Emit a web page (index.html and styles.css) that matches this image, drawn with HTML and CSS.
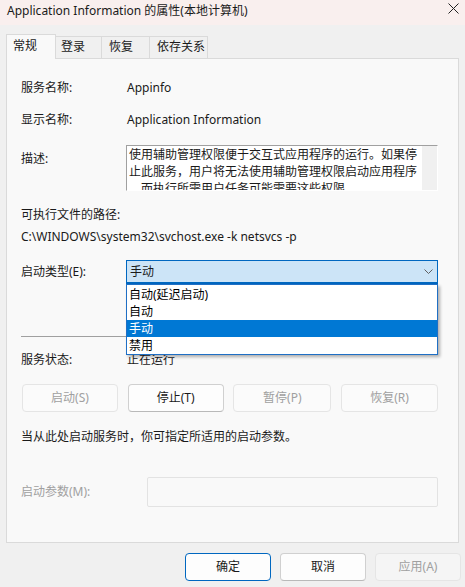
FILE: index.html
```html
<!DOCTYPE html>
<html lang="zh-CN">
<head>
<meta charset="utf-8">
<title>Application Information 的属性(本地计算机)</title>
<link rel="stylesheet" href="styles.css">
</head>
<body>
<div class="window">
  <div class="titlebar">
    <span class="title">Application Information 的属性(本地计算机)</span>
    <svg class="close" width="11" height="11" viewBox="0 0 11 11"><path d="M0.5 0.5 L10.5 10.5 M10.5 0.5 L0.5 10.5" stroke="#222" stroke-width="1" fill="none"/></svg>
  </div>
  <div class="client">
    <div class="tabs">
      <div class="tab tab-general active">常规</div>
      <div class="tab tab-logon">登录</div>
      <div class="tab tab-recovery">恢复</div>
      <div class="tab tab-deps">依存关系</div>
    </div>
    <div class="panel">
      <div class="row">
        <span class="label">服务名称:</span>
        <span class="value">Appinfo</span>
      </div>
      <div class="row row-display">
        <span class="label">显示名称:</span>
        <span class="value">Application Information</span>
      </div>
      <div class="row row-desc">
        <span class="label label-desc">描述:</span>
        <div class="descbox">
          <div class="desctext">使用辅助管理权限便于交互式应用程序的运行。如果停<br>止此服务，用户将无法使用辅助管理权限启动应用程序<br>，而执行所需用户任务可能需要这些权限。</div>
          <div class="scrolltrack"></div>
        </div>
      </div>
      <div class="exe-label">可执行文件的路径:</div>
      <div class="exe-path">C:\WINDOWS\system32\svchost.exe -k netsvcs -p</div>
      <div class="row row-type">
        <span class="label">启动类型(E):</span>
        <div class="select">
          <span>手动</span>
          <svg width="9" height="5" viewBox="0 0 9 5"><path d="M0.5 0.5 L4.5 4.5 L8.5 0.5" stroke="#5f5f5f" stroke-width="1" fill="none"/></svg>
          <ul class="dropdown">
            <li>自动(延迟启动)</li>
            <li>自动</li>
            <li class="selected">手动</li>
            <li>禁用</li>
          </ul>
        </div>
      </div>
      <div class="separator"></div>
      <div class="row row-status">
        <span class="label">服务状态:</span>
        <span class="value">正在运行</span>
      </div>
      <div class="svc-buttons">
        <button class="btn disabled">启动(S)</button>
        <button class="btn">停止(T)</button>
        <button class="btn disabled">暂停(P)</button>
        <button class="btn disabled">恢复(R)</button>
      </div>
      <div class="hint">当从此处启动服务时，你可指定所适用的启动参数。</div>
      <div class="row row-param">
        <span class="label disabled-text">启动参数(M):</span>
        <div class="param-input"></div>
      </div>
    </div>
    <div class="footer">
      <button class="btn fbtn default">确定</button>
      <button class="btn fbtn">取消</button>
      <button class="btn fbtn disabled">应用(A)</button>
    </div>
  </div>
</div>
</body>
</html>
```
FILE: styles.css
```css
* { box-sizing: border-box; }
html, body { margin: 0; padding: 0; }
body {
  width: 465px;
  height: 587px;
  overflow: hidden;
  background: #f0f0f0;
  font-family: "Noto Sans", "Noto Sans CJK SC", sans-serif;
  font-size: 12px;
  line-height: 16px;
  color: #1a1a1a;
}
.titlebar {
  height: 25px;
  background: #f9efee;
  display: flex;
  align-items: center;
  justify-content: space-between;
  padding: 0 6px 0 7px;
}
.title { margin-top: -3px; color: #1a1a1a; }
.close { margin-top: -8px; }
.client { padding: 9px 6px 0; }
.tabs {
  display: flex;
  align-items: flex-end;
  height: 24px;
  position: relative;
  z-index: 1;
}
.tab {
  height: 22px;
  line-height: 20px;
  border: 1px solid #dadada;
  border-bottom: none;
  border-left: none;
  background: #f0f0f0;
  padding-left: 7px;
}
.tab.active {
  height: 25px;
  line-height: 22px;
  margin-bottom: -1px;
  background: #f9f9f9;
  border-left: 1px solid #dadada;
}
.tab-general { width: 50px; padding-left: 6px; }
.tab-logon { width: 46px; padding-left: 5px; }
.tab-recovery { width: 48px; }
.tab-deps { width: 58px; }
.panel {
  background: #f9f9f9;
  border: 1px solid #dadada;
  padding: 21px 20px 35px 14px;
}
.row {
  display: grid;
  grid-template-columns: 105px 1fr;
}
.value { padding-left: 1px; }
.row-display { margin-top: 16px; }
.row-desc { margin-top: 17px; }
.label-desc { padding-top: 6px; }
.descbox {
  height: 46px;
  display: flex;
  background: #fff;
  border-top: 1px solid #a0a0a0;
  border-left: 1px solid #a0a0a0;
  border-right: 1px solid #fff;
  border-bottom: 1px solid #fff;
  overflow: hidden;
}
.desctext {
  flex: 1;
  padding-left: 2px;
  line-height: 17px;
  white-space: nowrap;
  overflow: hidden;
}
.scrolltrack { width: 15px; background: #f0f0f0; }
.exe-label { margin-top: 16px; }
.exe-path { margin-top: 6px; }
.row-type { margin-top: 15px; align-items: center; }
.select {
  position: relative;
  height: 24px;
  background: #cce4f7;
  border: 1px solid #0067c0;
  border-bottom-width: 2px;
  display: flex;
  align-items: center;
  justify-content: space-between;
  padding: 0 4px 0 3px;
  line-height: 21px;
}
.dropdown {
  position: absolute;
  z-index: 2;
  top: calc(100% + 2px);
  left: -1px;
  width: calc(100% + 2px);
  margin: 0;
  padding: 1px 0 0;
  list-style: none;
  background: #fff;
  border: 1px solid #1f6fc5;
  box-shadow: 2px 2px 3px rgba(0, 0, 0, 0.3);
}
.dropdown li {
  height: 17px;
  line-height: 17px;
  padding-left: 2px;
  color: #000;
}
.dropdown li.selected { background: #0078d4; color: #fff; }
.separator {
  margin-top: 52px;
  height: 1px;
  background: #a0a0a0;
}
.row-status { margin-top: 15px; }
.svc-buttons {
  margin-top: 16px;
  padding-left: 1px;
  display: grid;
  grid-template-columns: 96px 96px 98px 97px;
  justify-content: space-between;
}
.btn {
  height: 28px;
  margin: 0;
  padding: 0;
  font: inherit;
  line-height: 26px;
  color: #1a1a1a;
  background: #fdfdfd;
  border: 1px solid #d0d0d0;
  border-bottom-color: #b9b9b9;
  border-radius: 4px;
}
.btn.disabled {
  color: #a0a0a0;
  background: rgba(255, 255, 255, 0.35);
  border-color: #e5e5e5;
}
.hint { margin-top: 17px; }
.row-param {
  margin-top: 32px;
  grid-template-columns: 126px 1fr;
  align-items: center;
}
.disabled-text { color: #a0a0a0; }
.param-input {
  height: 30px;
  border: 1px solid #e3e3e3;
  background: #f9f9f9;
  border-radius: 2px;
}
.footer {
  margin-top: 10px;
  margin-right: -2px;
  display: flex;
  justify-content: flex-end;
  gap: 9px;
}
.fbtn { width: 86px; }
.btn.default { border-color: #0067c0; }
```
